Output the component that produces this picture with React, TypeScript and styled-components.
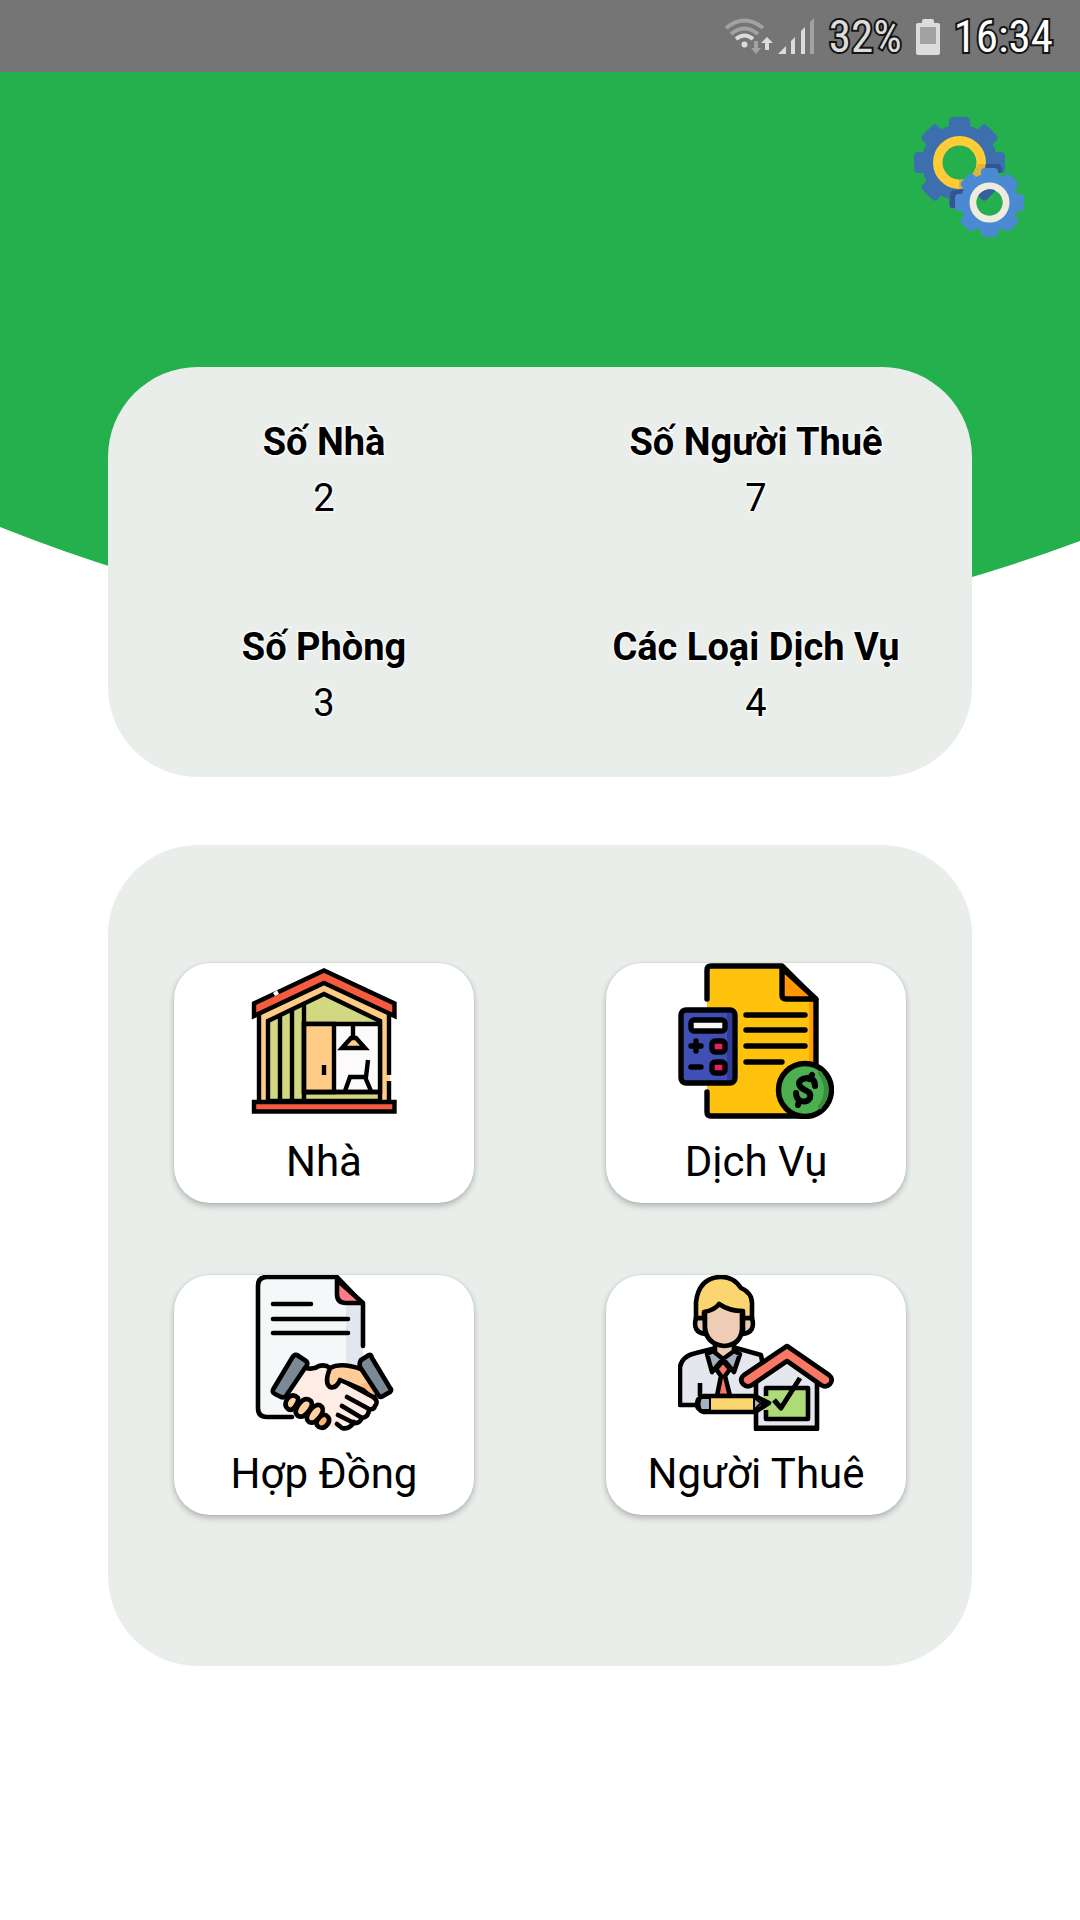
import React from "react";
import styled, { createGlobalStyle } from "styled-components";

const GlobalStyle = createGlobalStyle`
  *, *::before, *::after { box-sizing: border-box; }
  body {
    margin: 0;
    background: #fff;
    color: #000;
    font-family: Roboto, "Noto Sans", sans-serif;
  }
`;

const Page = styled.div`
  min-height: 100vh;
  display: flex;
  flex-direction: column;
  background: #fff;
`;

const StatusBar = styled.header`
  height: 72px;
  padding: 2px 27px 0 0;
  display: flex;
  align-items: center;
  justify-content: flex-end;
  background: #757575;
`;

const SignalIcon = styled.svg`
  width: 92px;
  height: 38px;
  margin-right: 14px;
`;

const BatteryIcon = styled.svg`
  width: 24px;
  height: 36px;
  margin: 0 14px;
`;

const StatusText = styled.span<{ $color: string }>`
  font-family: "Roboto Condensed", Roboto, sans-serif;
  font-size: 45px;
  line-height: 70px;
  color: ${(p) => p.$color};
  -webkit-text-stroke: 4px #141414;
  paint-order: stroke fill;
`;

const Screen = styled.main`
  position: relative;
  flex: 1;
  display: flex;
  flex-direction: column;
  align-items: center;
  padding-bottom: 72px;
`;

const Backdrop = styled.svg`
  position: absolute;
  inset: 0 0 auto 0;
  width: 100%;
  height: 580px;
`;

const Toolbar = styled.div`
  position: relative;
  width: 100%;
  height: 295px;
  display: flex;
  justify-content: flex-end;
  align-items: flex-start;
  padding: 44px 54px 0 0;
`;

const SettingsButton = styled.button`
  width: 112px;
  height: 122px;
  padding: 0;
  border: 0;
  background: none;
  cursor: pointer;
  svg { display: block; width: 112px; height: 122px; }
`;

const Panel = styled.section`
  position: relative;
  width: 80%;
  border-radius: 90px;
  background: #e9eeea;
`;

const Stats = styled.dl`
  margin: 0;
  display: grid;
  grid-template-columns: 1fr 1fr;
`;

const Stat = styled.div`
  padding: 47px 0 46px;
  text-align: center;
  font-size: 38px;
  line-height: 56px;
  -webkit-text-stroke: 3px #f6f8f7;
  paint-order: stroke fill;
`;

const StatLabel = styled.dt`
  font-weight: 700;
`;

const StatValue = styled.dd`
  margin: 0;
`;

const MenuPanel = styled(Panel)`
  margin-top: 68px;
  padding: 118px 0 151px;
`;

const Menu = styled.nav`
  display: grid;
  grid-template-columns: 1fr 1fr;
  justify-items: center;
  row-gap: 72px;
`;

const Tile = styled.button`
  width: 300px;
  padding: 0;
  border: 0;
  border-radius: 36px;
  background: #fff;
  box-shadow: 0 3px 6px rgba(0, 0, 0, 0.24), 0 0 2px rgba(0, 0, 0, 0.12);
  display: flex;
  flex-direction: column;
  align-items: center;
  gap: 2px;
  color: #000;
  font-family: inherit;
  font-size: 42px;
  line-height: 82px;
  cursor: pointer;
  svg { display: block; width: 156px; height: 156px; }
`;

function GearShape({ cx, cy, r, outer, tooth, fill }: { cx: number; cy: number; r: number; outer: number; tooth: number; fill: string }) {
  return (
    <g fill={fill}>
      <circle cx={cx} cy={cy} r={r} />
      {[0, 45, 90, 135].map((a) => (
        <rect
          key={a}
          x={cx - tooth / 2}
          y={cy - outer}
          width={tooth}
          height={outer * 2}
          rx="4"
          transform={`rotate(${a} ${cx} ${cy})`}
        />
      ))}
    </g>
  );
}

function GearsIcon() {
  return (
    <svg viewBox="914 116 112 122" aria-hidden="true">
      <defs>
        <mask id="bigHole" maskUnits="userSpaceOnUse" x="900" y="100" width="140" height="150">
          <rect x="900" y="100" width="140" height="150" fill="#fff" />
          <circle cx="959.500" cy="162.500" r="17" fill="#000" />
        </mask>
        <mask id="smallHole" maskUnits="userSpaceOnUse" x="900" y="100" width="140" height="150">
          <rect x="900" y="100" width="140" height="150" fill="#fff" />
          <circle cx="989.500" cy="202.500" r="13" fill="#000" />
        </mask>
        <clipPath id="bigBody">
          <circle cx="959.500" cy="162.500" r="38" />
          <rect x="914" y="152" width="91" height="21" rx="4" />
          <rect x="949" y="117" width="21" height="91" rx="4" />
          <rect x="949" y="117" width="21" height="91" rx="4" transform="rotate(-45 959.500 162.500)" />
        </clipPath>
      </defs>
      <g mask="url(#bigHole)">
        <GearShape cx={959.5} cy={162.5} r={38} outer={45.5} tooth={21} fill="#3d6fae" />
        <circle cx="959.500" cy="162.500" r="21.500" fill="none" stroke="#ffcb37" strokeWidth="10" />
        <g clipPath="url(#bigBody)">
          <path d="M950 208v-13q0-5 5-5h4v-11h5l11-8 3-7h19q5 0 5 4v42z" fill="#1b2d50" opacity="0.14" />
        </g>
      </g>
      <path d="M950 207v-11q0-6 6-6h9v15l-11 3q-4 0-4-1z" fill="#34568f" />
      <path d="M986 164h10q6 0 6 8h-18z" fill="#34568f" />
      <g mask="url(#smallHole)">
        <GearShape cx={989.5} cy={202.5} r={29} outer={34.500} tooth={17} fill="#4b8ad3" />
        <circle cx="989.500" cy="202.500" r="16.500" fill="none" stroke="#efebdf" strokeWidth="7" />
      </g>
      <path d="M979 195q7-8 16-5l-7 8q-2 2-4 1z" fill="#34619d" />
    </svg>
  );
}

function HouseIcon() {
  return (
    <svg viewBox="0 0 156 156" aria-hidden="true" stroke="#000" strokeWidth="4.400">
      <path d="M12 138V52L78 20l66 32v86z" fill="#ffcc85" stroke="none" />
      <path d="M22 138V58L78 31l56 27v80z" fill="#d2d782" />
      <path d="M58 61h76v68H58z" fill="#fdfafc" />
      <path d="M58 61h30v68H58z" fill="#ffcc85" />
      <path d="M58 129h76M58 41v97M46 47v91M34 53v85" fill="none" />
      <path d="M13 138V52M143 52v60M143 118v20" fill="none" />
      <path d="M8 53V40.500L78 7.500l70.500 33V53L78 20z" fill="#f45b3f" />
      <path d="M8 139h140.500v9.500H8z" fill="#f45b3f" />
      <path d="M27 30l4-3 2 4-4 2z" fill="#fff" stroke="none" />
      <path d="M78 102v10" />
      <path d="M107 61v13" />
      <path d="M105 75h5l9 10H96z" fill="#ffcc85" />
      <path d="M122 97l-2 17h-16l-5 14M119 114l6 14" fill="none" />
    </svg>
  );
}

function InvoiceIcon() {
  return (
    <svg viewBox="0 0 156 156" aria-hidden="true" stroke="#000" strokeWidth="5.400" strokeLinecap="round" strokeLinejoin="round">
      <path d="M33 2h71l34 34v117H33q-4 0-4-4V7q0-5 4-5z" fill="#ffc20d" stroke="none" />
      <path d="M131 38h5v66h-5z" fill="#ff9d05" stroke="none" />
      <path d="M29 36V7q0-4 4-4h71l34 34v68M29 129v20q0 4 4 4h90" fill="none" />
      <path d="M104 5v27q0 4 4 4h30z" fill="#ff9800" />
      <path d="M68 52h59M68 67h59M68 83h59M68 99h36" />
      <rect x="3" y="47" width="54" height="73" rx="5" fill="#3f4fb3" />
      <path d="M49 50h5v67h-5z" fill="#2f3c9d" stroke="none" />
      <rect x="13" y="57" width="34" height="11" rx="3" fill="#f7f7f7" />
      <g fill="#e91e63">
        <rect x="34" y="78" width="13" height="11" rx="3" />
        <rect x="34" y="99" width="13" height="11" rx="3" />
      </g>
      <path d="M13 83h10M18 78v10M13 104h10" />
      <circle cx="127" cy="127" r="26.500" fill="#4caf50" />
      <path d="M142 110q12 17 0 34" fill="none" stroke="#388e3c" strokeWidth="4" />
      <path d="M137 123q0-8-8-8-8 1-8 6 1 4 6 6 7 3 5 8-3 5-9 3-5-2-5-8M134 112l-3 4M121 138l-1 4" fill="none" strokeWidth="6" />
    </svg>
  );
}

function ContractIcon() {
  return (
    <svg viewBox="-4 0 156 156" aria-hidden="true" stroke="#000" strokeWidth="4.600" strokeLinecap="round" strokeLinejoin="round">
      <path d="M18 2h69l26 28v113H18q-9 0-9-9V11q0-9 9-9z" fill="#f4f8f9" stroke="none" />
      <path d="M96 28h17v64H96z" fill="#e2e6ee" stroke="none" />
      <path d="M113 71V29L87 2H17Q8 2 8 11v122q0 9 9 9h25" fill="none" />
      <path d="M87 5v14q0 9 9 9h17z" fill="#ff7b86" />
      <path d="M23 29h38M23 44h75M23 58h75" />
      <path d="M55 94q9 0 15-3 8 2 15-1 12-1 24 4l17 23q1 8-2 16l-30 19q-10 4-15-1L38 124z" fill="#ffece5" stroke="none" />
      <path d="M80 93q14-5 31 2l14 25-35-15q-4 9-9 7-4-3-1-19z" fill="#ffcc9a" stroke="none" />
      <path d="M56 93q7 2 13-2 6-2 11 2M125 120L90 105q-4 9-10 7-6-4 0-19 11-6 31 1" fill="none" />
      <path d="M110 109l14-3 3 13-5 1z" fill="#ffb780" stroke="none" />
      <path d="M97 122l22 12q5 1 6-3 4-5-2-9l-24-13M92 131l20 12q7-1 7-9M112 143q-3 6-8 5l-16-8M104 147q-5 8-12 6l-5-4" fill="none" />
      <g fill="#ffd0a0">
        <path d="M38 134q-5-4 0-11 5-5 10 0 1 3-4 10-3 3-6 1z" />
        <path d="M48 141q-5-4 1-12 6-8 12-3 3 4-4 12-4 5-9 3z" />
        <path d="M59 147q-5-4 2-13 7-7 11-2 3 4-4 12-4 5-9 3z" />
        <path d="M69 152q-5-3 0-9 5-6 9-1 3 4-2 9-3 3-7 1z" fill="#ffb36e" />
      </g>
      <path d="M47 80l9 6q2 2 1 4l-21 31q-2 2-5 1l-6-3q-4-2-1-6l18-30q2-4 5-3z" fill="#7b8995" />
      <path d="M119 80l-8 5q-2 3-1 7l19 29q1 2 4 0l7-4q2-2 0-4l-18-30q-1-4-3-3z" fill="#7b8995" />
    </svg>
  );
}

function TenantIcon() {
  return (
    <svg viewBox="0 0 156 156" aria-hidden="true" stroke="#000" strokeWidth="4.600" strokeLinejoin="round">
      <path d="M2 130V92q2-11 16-14l20-5h20l25 7 9 50z" fill="#e4e7ed" />
      <path d="M37 68h19v14l-10 9-9-9z" fill="#eecdb4" />
      <path d="M18 43q-4 14 9 16v-16zM74 43q4 14-9 16v-16z" fill="#eecdb4" />
      <path d="M27 36l15-7 22 7v18q-1 16-18 17-18-2-19-19z" fill="#eecdb4" />
      <path d="M18 43V27Q21 3 42 2q13-1 21 11 12 5 11 18v12h-9v-7q-14 0-24-7-4 6-15 8v6z" fill="#fbd56f" />
      <path d="M35 76l10 8-11 13-5-18zM56 76l-11 8 11 13 6-18z" fill="#a5afbd" />
      <path d="M45 86l7 8-5 7 5 20H39l4-20-5-7z" fill="#f97863" />
      <path d="M22 108v13" />
      <path d="M78 106l31-23 30 23v48H78z" fill="#e4e7ed" />
      <path d="M109 71l42 29q5 4 1 9-4 4-9 1l-34-24-35 24q-5 3-9-1-4-5 1-9z" fill="#f97863" />
      <path d="M88 113h42v31H88z" fill="#addb78" />
      <path d="M76 153h64" strokeWidth="5" />
      <path d="M96 125l7 8 19-30" fill="none" strokeWidth="5" />
      <path d="M88 121v14" stroke="#addb78" strokeWidth="6" />
      <path d="M26 121h51l14 7-14 9H26q-7-2-7-8t7-8z" fill="#fbd56f" />
      <path d="M23 123h9v12h-9q-3-6 0-12zM76 123l7 5-7 7z" fill="#a5afbd" strokeWidth="2" />
      <path d="M84 127l5 1-5 3z" strokeWidth="3" />
    </svg>
  );
}

const stats = [
  { label: "Số Nhà", value: 2 },
  { label: "Số Người Thuê", value: 7 },
  { label: "Số Phòng", value: 3 },
  { label: "Các Loại Dịch Vụ", value: 4 },
];

const menu = [
  { label: "Nhà", Icon: HouseIcon },
  { label: "Dịch Vụ", Icon: InvoiceIcon },
  { label: "Hợp Đồng", Icon: ContractIcon },
  { label: "Người Thuê", Icon: TenantIcon },
];

export default function App() {
  return (
    <>
      <GlobalStyle />
      <Page>
        <StatusBar>
          <SignalIcon viewBox="724 17 92 38" aria-hidden="true">
            <g fill="none" strokeWidth="4">
              <path d="M727 27q18.500-15 37 0" stroke="#a2a2a2" />
              <path d="M732 33q13.500-11 27 0" stroke="#a2a2a2" />
              <path d="M737 38q8.500-7 17 0" stroke="#dcdcdc" />
            </g>
            <circle cx="745.500" cy="43.500" r="3" fill="#dcdcdc" />
            <path d="M755 40h4v7h3l-5 6-5-6h3z" fill="#a2a2a2" />
            <path d="M766 49h4v-7h4l-6-6-6 6h4z" fill="#dcdcdc" />
            <path d="M779 53l8-8v8zM792 53V40l4-4v17zM802 53V30l4-4v27z" fill="#dcdcdc" />
            <path d="M811 53V21l4-4v36z" fill="#a2a2a2" />
          </SignalIcon>
          <StatusText $color="#dcdcdc">32%</StatusText>
          <BatteryIcon viewBox="0 0 24 36" aria-hidden="true">
            <path d="M6 4V2q0-2 2-2h8q2 0 2 2v2h4q2 0 2 2v28q0 2-2 2H2q-2 0-2-2V6q0-2 2-2z" fill="#dcdcdc" />
            <path d="M4 8h16v17H4z" fill="#a2a2a2" />
          </BatteryIcon>
          <StatusText $color="#fff">16:34</StatusText>
        </StatusBar>
        <Screen>
          <Backdrop viewBox="0 0 1080 580" preserveAspectRatio="none" aria-hidden="true">
            <path d="M0 0H1080V469Q540 670 0 455z" fill="#24b14d" />
          </Backdrop>
          <Toolbar>
            <SettingsButton type="button" aria-label="Cài đặt">
              <GearsIcon />
            </SettingsButton>
          </Toolbar>
          <Panel>
            <Stats>
              {stats.map((s) => (
                <Stat key={s.label}>
                  <StatLabel>{s.label}</StatLabel>
                  <StatValue>{s.value}</StatValue>
                </Stat>
              ))}
            </Stats>
          </Panel>
          <MenuPanel>
            <Menu>
              {menu.map(({ label, Icon }) => (
                <Tile key={label} type="button">
                  <Icon />
                  {label}
                </Tile>
              ))}
            </Menu>
          </MenuPanel>
        </Screen>
      </Page>
    </>
  );
}
